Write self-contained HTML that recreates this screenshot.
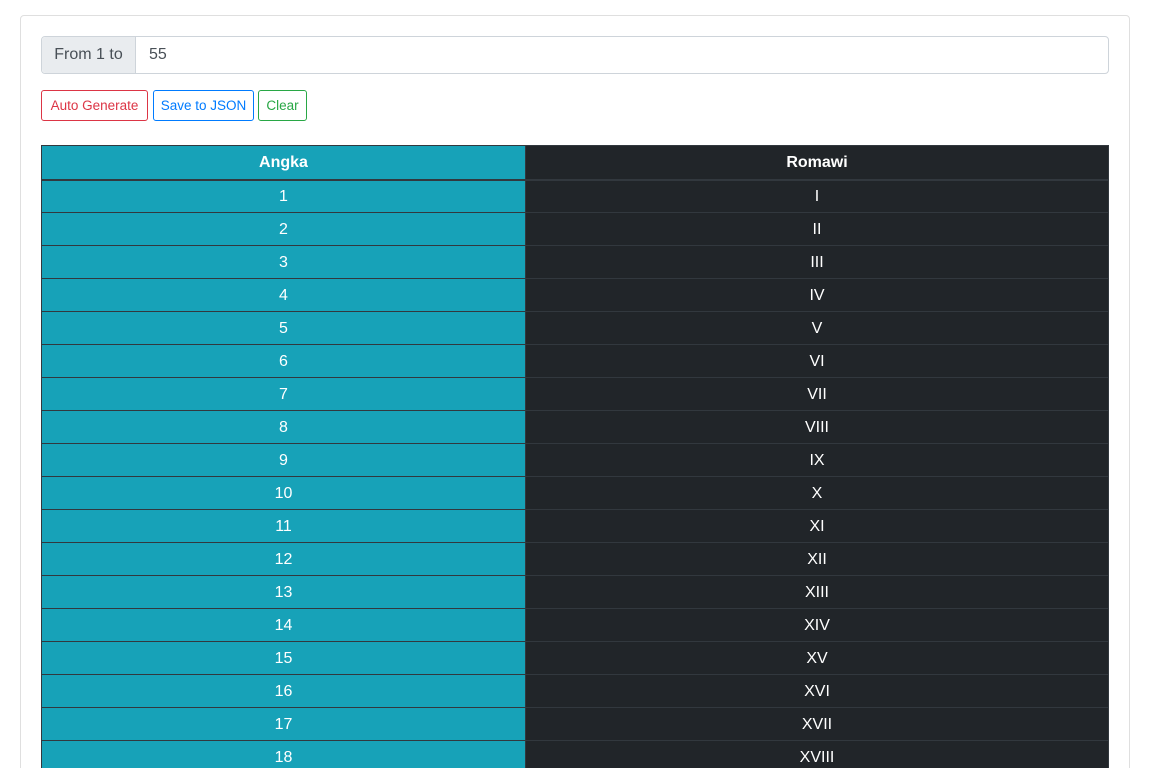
<!DOCTYPE html>
<html style="height:768px;overflow:hidden"><head><style>
*{box-sizing:border-box}
body{margin:0;background:#fff;font-family:"Liberation Sans",sans-serif;color:#212529;overflow:hidden;height:768px;position:relative}
.card{position:absolute;left:20px;top:15px;width:1110px;height:760px;border:1px solid #dfdfdf;border-radius:4px}
.ig{position:absolute;left:41px;top:36px;width:1068px;height:38px;border:1px solid #ced4da;border-radius:4px;display:flex;font-size:16px;color:#495057}
.addon{width:94px;background:#e9ecef;border-right:1px solid #ced4da;display:flex;align-items:center;justify-content:center;border-radius:4px 0 0 4px}
.val{padding-left:13px;display:flex;align-items:center}
.btn{position:absolute;top:90px;height:31px;border:1px solid;border-radius:3px;font-size:13.5px;display:flex;align-items:center;justify-content:center;background:#fff}
table{position:absolute;left:41px;top:145px;width:1068px;border-collapse:collapse;font-size:16px;color:#fff;text-align:center}
th,td{height:33px;padding:0;border:1px solid #32383e}
th{font-weight:bold;height:34px;border-bottom:2px solid #32383e;padding-top:1px}
td{padding-top:1px}
td:first-child,th:first-child{background:#17a2b8;width:484px}
td:last-child,th:last-child{background:#212529}
</style></head><body>
<div class="card"></div>
<div class="ig"><div class="addon">From 1 to</div><div class="val">55</div></div>
<div class="btn" style="left:41px;width:107px;color:#dc3545;border-color:#dc3545">Auto Generate</div>
<div class="btn" style="left:153px;width:101px;color:#007bff;border-color:#007bff">Save to JSON</div>
<div class="btn" style="left:258px;width:49px;color:#28a745;border-color:#28a745">Clear</div>
<table>
<tr><th>Angka</th><th>Romawi</th></tr>
<tr><td>1</td><td>I</td></tr>
<tr><td>2</td><td>II</td></tr>
<tr><td>3</td><td>III</td></tr>
<tr><td>4</td><td>IV</td></tr>
<tr><td>5</td><td>V</td></tr>
<tr><td>6</td><td>VI</td></tr>
<tr><td>7</td><td>VII</td></tr>
<tr><td>8</td><td>VIII</td></tr>
<tr><td>9</td><td>IX</td></tr>
<tr><td>10</td><td>X</td></tr>
<tr><td>11</td><td>XI</td></tr>
<tr><td>12</td><td>XII</td></tr>
<tr><td>13</td><td>XIII</td></tr>
<tr><td>14</td><td>XIV</td></tr>
<tr><td>15</td><td>XV</td></tr>
<tr><td>16</td><td>XVI</td></tr>
<tr><td>17</td><td>XVII</td></tr>
<tr><td>18</td><td>XVIII</td></tr>
</table>
</body></html>
